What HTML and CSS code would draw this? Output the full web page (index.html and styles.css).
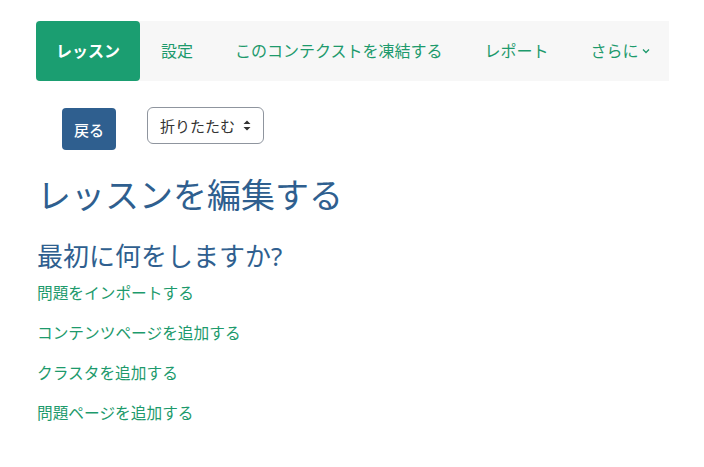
FILE: index.html
```html
<!DOCTYPE html>
<html lang="ja">

<head>
    <meta charset="UTF-8">
    <meta name="viewport" content="width=device-width, initial-scale=1.0">
    <title>レッスンを編集する</title>
    <link rel="stylesheet" href="styles.css">
</head>

<body>
    <div class="page">
        <nav class="secondary-nav">
            <a class="nav-tab active" href="#">レッスン</a>
            <a class="nav-tab" href="#">設定</a>
            <a class="nav-tab" href="#">このコンテクストを凍結する</a>
            <a class="nav-tab" href="#">レポート</a>
            <a class="nav-tab more" href="#">さらに
                <svg class="caret" width="8" height="6" viewBox="0 0 8 6">
                    <path d="M1 1.5 L4 4.5 L7 1.5" fill="none" stroke="currentColor" stroke-width="1.3"/>
                </svg>
            </a>
        </nav>

        <div class="toolbar">
            <button class="btn-back" type="button">戻る</button>
            <div class="select-wrap">
                <span>折りたたむ</span>
                <svg class="updown" width="8" height="11" viewBox="0 0 8 11">
                    <path d="M4 0.5 L7.5 4 L0.5 4 Z M4 10.5 L7.5 7 L0.5 7 Z" fill="#333"/>
                </svg>
            </div>
        </div>

        <h2 class="page-title">レッスンを編集する</h2>
        <h3 class="section-title">最初に何をしますか?</h3>

        <ul class="actions">
            <li><a href="#">問題をインポートする</a></li>
            <li><a href="#">コンテンツページを追加する</a></li>
            <li><a href="#">クラスタを追加する</a></li>
            <li><a href="#">問題ページを追加する</a></li>
        </ul>
    </div>
</body>

</html>
```

FILE: styles.css
```css
body {
    font-family: "Noto Sans", "Noto Sans CJK JP", sans-serif;
    background-color: #fff;
    color: #1d2125;
    margin: 0;
}

.page {
    padding: 21px 35px 0 36px;
}

.secondary-nav {
    display: flex;
    align-items: stretch;
    height: 60px;
    background: #f7f7f7;
    max-width: 633px;
}

.nav-tab {
    display: flex;
    align-items: center;
    padding: 0 21px 3px;
    font-size: 16px;
    color: #1d9a6c;
    text-decoration: none;
    white-space: nowrap;
}

.nav-tab.active {
    background: #1b9e71;
    color: #fff;
    font-weight: 600;
    border-radius: 4px;
    padding: 0 20px 3px;
}

.caret {
    margin-left: 3px;
    margin-top: 2px;
}

.toolbar {
    display: flex;
    align-items: flex-start;
    gap: 31px;
    margin-top: 26px;
    padding-left: 26px;
}

.btn-back {
    background: #2f5f8f;
    color: #fff;
    border: none;
    border-radius: 4px;
    width: 54px;
    height: 42px;
    margin-top: 1px;
    font-family: inherit;
    font-size: 15px;
    font-weight: 500;
    padding: 0;
}

.select-wrap {
    display: flex;
    align-items: center;
    gap: 8px;
    height: 37px;
    box-sizing: border-box;
    padding: 0 12px 0 12px;
    border: 1px solid #8f959e;
    border-radius: 6px;
    font-size: 15px;
    color: #333;
}

.page-title {
    font-size: 34px;
    font-weight: normal;
    color: #2f5f8f;
    margin: 25px 0 0 1px;
    line-height: 1.2;
}

.section-title {
    font-size: 26px;
    font-weight: normal;
    color: #2f5f8f;
    margin: 25px 0 0 1px;
    line-height: 1.2;
}

.actions {
    list-style: none;
    margin: 9px 0 0 1px;
    padding: 0;
}

.actions li {
    height: 40px;
    font-size: 15.7px;
    line-height: 24px;
}

.actions a {
    color: #1d9a6c;
    text-decoration: none;
}
```
